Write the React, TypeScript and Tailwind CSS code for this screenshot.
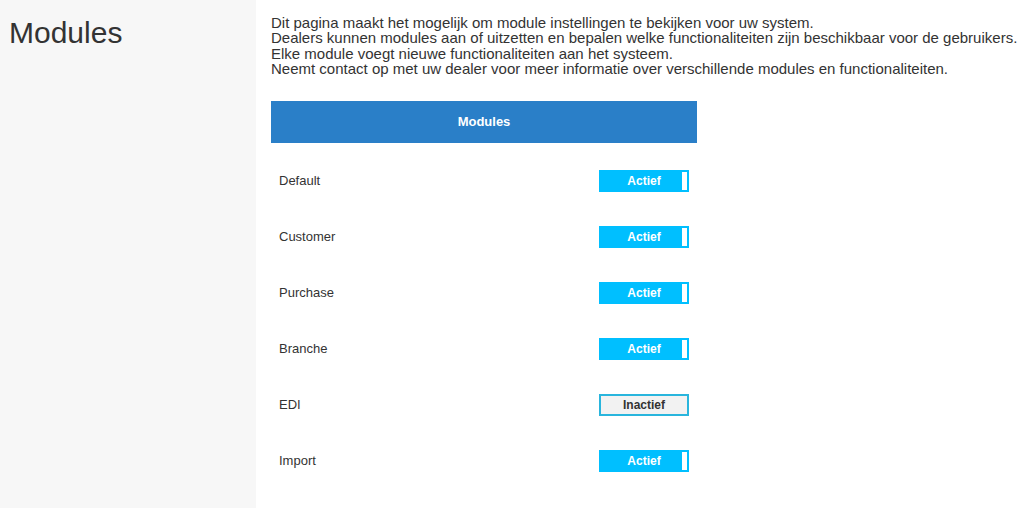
import React from 'react';

const modules = [
  { name: 'Default', active: true },
  { name: 'Customer', active: true },
  { name: 'Purchase', active: true },
  { name: 'Branche', active: true },
  { name: 'EDI', active: false },
  { name: 'Import', active: true },
];

function Toggle({ active }: { active: boolean }) {
  if (active) {
    return (
      <button className="flex h-[22px] w-[90px] items-stretch border border-[#00bfff] bg-[#00bfff] p-0">
        <span className="flex flex-1 items-center justify-center pl-[6px] text-[12px] font-bold text-white">
          Actief
        </span>
        <span className="my-[1px] mr-[1px] w-[5px] bg-white" />
      </button>
    );
  }
  return (
    <button className="flex h-[22px] w-[90px] items-center justify-center border-[2px] border-[#29b5dd] bg-[#f2f2f2] text-[12px] font-bold text-[#333]">
      Inactief
    </button>
  );
}

export default function App() {
  return (
    <div className="flex min-h-[508px] w-full font-['Liberation_Sans',Arial,sans-serif] text-[#333]">
      <aside className="w-[256px] shrink-0 bg-[#f7f7f7] pl-[9px] pt-[15px]">
        <h1 className="text-[30px] leading-[36px]">Modules</h1>
      </aside>

      <main className="flex-1 bg-white pl-[15px] pt-[15px]">
        <p className="text-[15px] leading-[15.3px]">
          Dit pagina maakt het mogelijk om module instellingen te bekijken voor uw system.
          <br />
          Dealers kunnen modules aan of uitzetten en bepalen welke functionaliteiten zijn beschikbaar voor de gebruikers.
          <br />
          Elke module voegt nieuwe functionaliteiten aan het systeem.
          <br />
          Neemt contact op met uw dealer voor meer informatie over verschillende modules en functionaliteiten.
        </p>

        <div className="mt-[25px] w-[426px]">
          <div className="flex h-[42px] items-center justify-center bg-[#2a7fc8] text-[13px] font-bold text-white">
            Modules
          </div>
          <div className="pt-[10px]">
            {modules.map((m) => (
              <div key={m.name} className="flex h-[56px] items-center justify-between pl-[8px] pr-[8px]">
                <span className="text-[13px]">{m.name}</span>
                <Toggle active={m.active} />
              </div>
            ))}
          </div>
        </div>
      </main>
    </div>
  );
}
